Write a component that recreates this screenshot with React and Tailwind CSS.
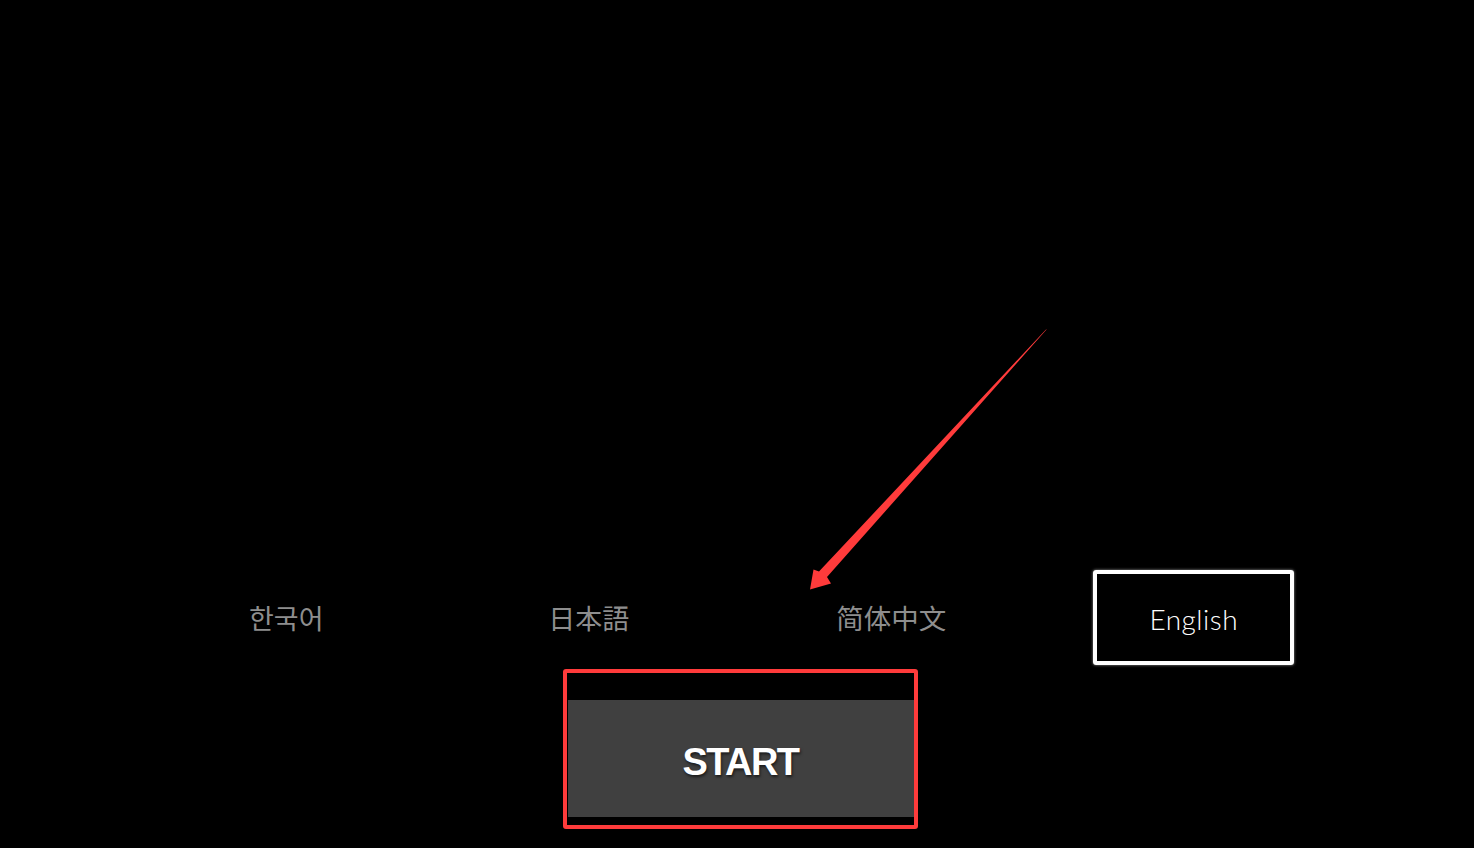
import React from "react";

const langs = [
  { label: "한국어", cls: "text-[27px]", font: "'Noto Sans CJK KR', sans-serif" },
  { label: "日本語", cls: "text-[27px]", font: "'Noto Sans CJK JP', sans-serif" },
  { label: "简体中文", cls: "text-[27.5px]", font: "'Noto Sans CJK SC', sans-serif" },
];

export default function App() {
  return (
    <div className="relative w-full h-[848px] bg-black overflow-hidden flex flex-col justify-end items-center pb-[19px] pl-[6px]">
      <div className="grid grid-cols-4 w-[1210px] h-[95px] items-center justify-items-center">
        {langs.map((l) => (
          <span
            key={l.label}
            className={`${l.cls} text-[#8e8e8e] leading-none`}
            style={{ fontFamily: l.font }}
          >
            {l.label}
          </span>
        ))}
        <div className="w-[201px] h-[95px] border-4 border-white rounded-[3px] shadow-[0_0_3px_rgba(255,255,255,0.6)] flex items-center justify-center pt-[3px]">
          <span className="font-['Lato',sans-serif] font-light text-[28px] text-white leading-none tracking-[0.5px]">
            English
          </span>
        </div>
      </div>
      <div className="mt-[4px] w-[355px] h-[160px] border-4 border-[#ff3b3b] rounded-[3px] bg-black pt-[27px] pb-[8px]">
        <div className="h-[117px] ml-[1px] bg-[#404040] flex items-center justify-center pt-[6px]">
          <span className="font-['Liberation_Sans',sans-serif] font-bold text-[38px] text-white leading-none tracking-[-1.6px] [text-shadow:1px_2px_3px_rgba(0,0,0,0.6)]">
            START
          </span>
        </div>
      </div>
      <svg
        className="absolute inset-0 pointer-events-none"
        width="1474"
        height="848"
        viewBox="0 0 1474 848"
      >
        <polygon
          points="1047,329 827,577 831,583.5 810,589.5 813.5,569.5 819,571.5 1045.5,330"
          fill="#ff3b3b"
        />
      </svg>
    </div>
  );
}
